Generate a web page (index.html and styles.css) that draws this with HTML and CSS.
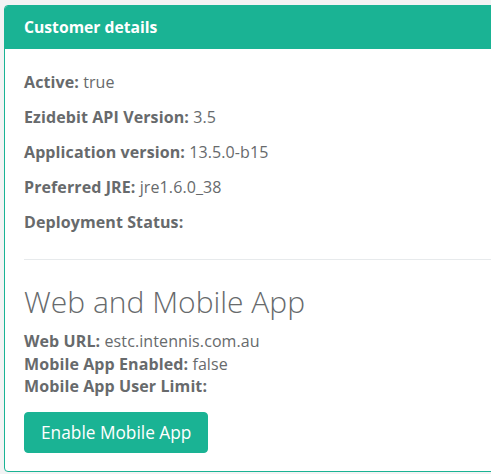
FILE: index.html
```html
<!DOCTYPE html>
<html>
<head>
<meta charset="utf-8">
<link rel="stylesheet" href="styles.css">
</head>
<body>
<div class="panel">
  <div class="panel-heading">Customer details</div>
  <div class="panel-body">
    <p class="row"><b>Active:</b> true</p>
    <p class="row"><b>Ezidebit API Version:</b> 3.5</p>
    <p class="row"><b>Application version:</b> 13.5.0-b15</p>
    <p class="row"><b>Preferred JRE:</b> jre1.6.0_38</p>
    <p class="row"><b>Deployment Status:</b> </p>
    <hr class="divider">
    <h3 class="section-title">Web and Mobile App</h3>
    <div class="info">
      <div><b>Web URL:</b> estc.intennis.com.au</div>
      <div><b>Mobile App Enabled:</b> false</div>
      <div><b>Mobile App User Limit:</b> </div>
    </div>
    <button class="btn">Enable Mobile App</button>
  </div>
</div>
</body>
</html>
```
FILE: styles.css
```css
html, body {
  margin: 0;
  padding: 0;
  background: #f3f3f4;
  overflow: hidden;
}
body {
  font-family: "Open Sans", "DejaVu Sans", sans-serif;
  color: #676a6c;
  font-size: 16px;
  letter-spacing: 0.1px;
}
.panel {
  margin: 5px -30px 0 4px;
  border: 1px solid #1ab394;
  border-radius: 4px;
  background: #fff;
  overflow: hidden;
}
.panel-heading {
  background: #1ab394;
  color: #fff;
  font-weight: 700;
  font-size: 15.7px;
  letter-spacing: 0;
  height: 43px;
  line-height: 43px;
  padding: 0 19px;
}
.panel-body {
  padding: 23px 19px 18px 19px;
}
.row {
  margin: 0 0 14px 0;
  line-height: 21px;
}
.row b, .info b {
  font-weight: 700;
}
.divider {
  border: 0;
  border-top: 1px solid #e7eaec;
  margin: 26px 0 0 0;
}
.section-title {
  font-weight: 300;
  font-size: 30px;
  letter-spacing: 0;
  line-height: 33px;
  margin: 25px 0 12px 0;
}
.info {
  line-height: 22.5px;
}
.btn {
  display: block;
  margin-top: 14px;
  background: #1ab394;
  border: 1px solid #1ab394;
  border-radius: 4px;
  color: #fff;
  font-family: "Open Sans", "DejaVu Sans", sans-serif;
  font-size: 17.3px;
  letter-spacing: 0;
  line-height: 27px;
  padding: 6px 16px;
}
```
